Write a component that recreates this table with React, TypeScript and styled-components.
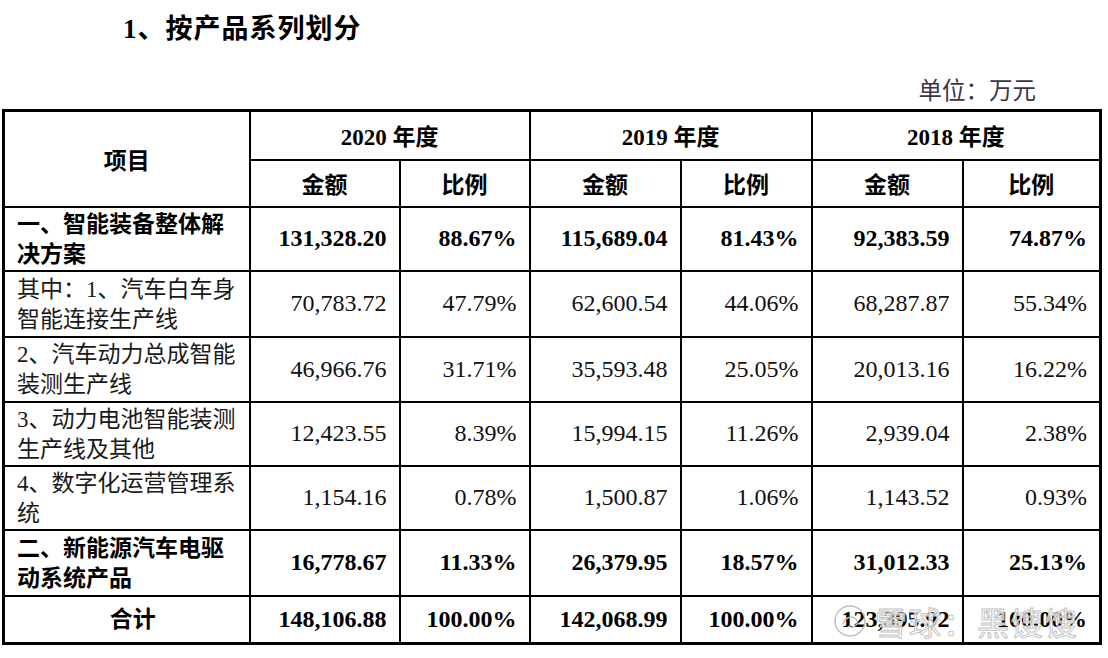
import React from "react";
import styled, { createGlobalStyle } from "styled-components";

const GlobalStyle = createGlobalStyle`
  html, body { margin: 0; padding: 0; background: #fff; }
  body {
    font-family: "Liberation Serif", "Noto Sans CJK SC", serif;
    color: #000;
  }
`;

type Row = {
  label: string[];
  bold?: boolean;
  center?: boolean;
  height: number;
  values: string[];
};

const rows: Row[] = [
  {
    label: ["一、智能装备整体解", "决方案"],
    bold: true,
    height: 64,
    values: ["131,328.20", "88.67%", "115,689.04", "81.43%", "92,383.59", "74.87%"],
  },
  {
    label: ["其中：1、汽车白车身", "智能连接生产线"],
    height: 66,
    values: ["70,783.72", "47.79%", "62,600.54", "44.06%", "68,287.87", "55.34%"],
  },
  {
    label: ["2、汽车动力总成智能", "装测生产线"],
    height: 65,
    values: ["46,966.76", "31.71%", "35,593.48", "25.05%", "20,013.16", "16.22%"],
  },
  {
    label: ["3、动力电池智能装测", "生产线及其他"],
    height: 64,
    values: ["12,423.55", "8.39%", "15,994.15", "11.26%", "2,939.04", "2.38%"],
  },
  {
    label: ["4、数字化运营管理系", "统"],
    height: 64,
    values: ["1,154.16", "0.78%", "1,500.87", "1.06%", "1,143.52", "0.93%"],
  },
  {
    label: ["二、新能源汽车电驱", "动系统产品"],
    bold: true,
    height: 66,
    values: ["16,778.67", "11.33%", "26,379.95", "18.57%", "31,012.33", "25.13%"],
  },
  {
    label: ["合计"],
    bold: true,
    center: true,
    height: 48,
    values: ["148,106.88", "100.00%", "142,068.99", "100.00%", "123,395.92", "100.00%"],
  },
];

const years = ["2020", "2019", "2018"];
const colWidths = [246, 150, 130, 151, 131, 151, 138];

function App() {
  return (
    <Page>
      <GlobalStyle />
      <Title>1、按产品系列划分</Title>
      <Unit>单位：万元</Unit>
      <Table>
        <colgroup>
          {colWidths.map((w, i) => (
            <col key={i} style={{ width: w }} />
          ))}
        </colgroup>
        <thead>
          <HeadRow $h={49}>
            <HeadCell rowSpan={2}>项目</HeadCell>
            {years.map((y) => (
              <HeadCell key={y} colSpan={2}>
                {y} 年度
              </HeadCell>
            ))}
          </HeadRow>
          <HeadRow $h={47}>
            {years.map((y) => (
              <React.Fragment key={y}>
                <HeadCell>金额</HeadCell>
                <HeadCell>比例</HeadCell>
              </React.Fragment>
            ))}
          </HeadRow>
        </thead>
        <tbody>
          {rows.map((row, idx) => (
            <BodyRow key={idx} $h={row.height}>
              <LabelCell $bold={row.bold} $center={row.center}>
                {row.label.map((line, i) => (
                  <LabelLine key={i}>{line}</LabelLine>
                ))}
              </LabelCell>
              {row.values.map((v, i) => (
                <NumCell key={i} $bold={row.bold}>
                  {v}
                </NumCell>
              ))}
            </BodyRow>
          ))}
        </tbody>
      </Table>
      <Watermark>
        <svg width="34" height="34" viewBox="0 0 34 34">
          <circle cx="17" cy="17" r="15" fill="none" stroke="#bdbdbd" strokeWidth="1.4" />
          <path
            d="M10 20 C12 12, 22 11, 24 17 C25 22, 19 25, 15 22"
            fill="none"
            stroke="#bdbdbd"
            strokeWidth="1.4"
          />
        </svg>
        <WatermarkText>雪球：黑馊馊</WatermarkText>
      </Watermark>
    </Page>
  );
}

export default App;

const Page = styled.div`
  position: relative;
  width: 1108px;
  height: 658px;
  overflow: hidden;
  background: #fff;
`;

const Title = styled.div`
  padding: 11px 0 0 123px;
  height: 36px;
  font-size: 27px;
  line-height: 36px;
  font-weight: 700;
  letter-spacing: 1px;
`;

const Unit = styled.div`
  margin-top: 31px;
  padding-right: 72px;
  text-align: right;
  font-size: 23.5px;
  line-height: 26px;
  height: 26px;
  color: #3b3442;
`;

const Table = styled.table`
  margin: 5px 0 0 2px;
  width: 1097px;
  table-layout: fixed;
  border-collapse: collapse;
  border: 3px solid #000;
`;

const HeadRow = styled.tr<{ $h: number }>`
  height: ${(p) => p.$h}px;
`;

const BodyRow = styled.tr<{ $h: number }>`
  height: ${(p) => p.$h}px;
`;

const HeadCell = styled.th`
  border: 2px solid #000;
  padding: 0;
  text-align: center;
  vertical-align: middle;
  font-size: 23px;
  font-weight: 700;
`;

const LabelCell = styled.td<{ $bold?: boolean; $center?: boolean }>`
  border: 2px solid #000;
  padding: 2px 0 0 12px;
  text-align: ${(p) => (p.$center ? "center" : "left")};
  vertical-align: middle;
  font-size: 23px;
  line-height: 30px;
  font-weight: ${(p) => (p.$bold ? 700 : 400)};
  color: ${(p) => (p.$bold ? "#000" : "#1a1a1a")};
`;

const LabelLine = styled.div`
  white-space: nowrap;
`;

const NumCell = styled.td<{ $bold?: boolean }>`
  border: 2px solid #000;
  padding: 0 12px 0 0;
  text-align: right;
  vertical-align: middle;
  font-size: 24px;
  font-weight: ${(p) => (p.$bold ? 700 : 400)};
  color: ${(p) => (p.$bold ? "#000" : "#111")};
`;

const Watermark = styled.div`
  position: absolute;
  left: 833px;
  top: 603px;
  display: flex;
  align-items: center;
  gap: 8px;
`;

const WatermarkText = styled.span`
  font-family: "Noto Sans CJK SC", sans-serif;
  font-size: 32px;
  line-height: 36px;
  color: rgba(255, 255, 255, 0.75);
  -webkit-text-stroke: 1px #c4c4c4;
  letter-spacing: 2px;
`;
